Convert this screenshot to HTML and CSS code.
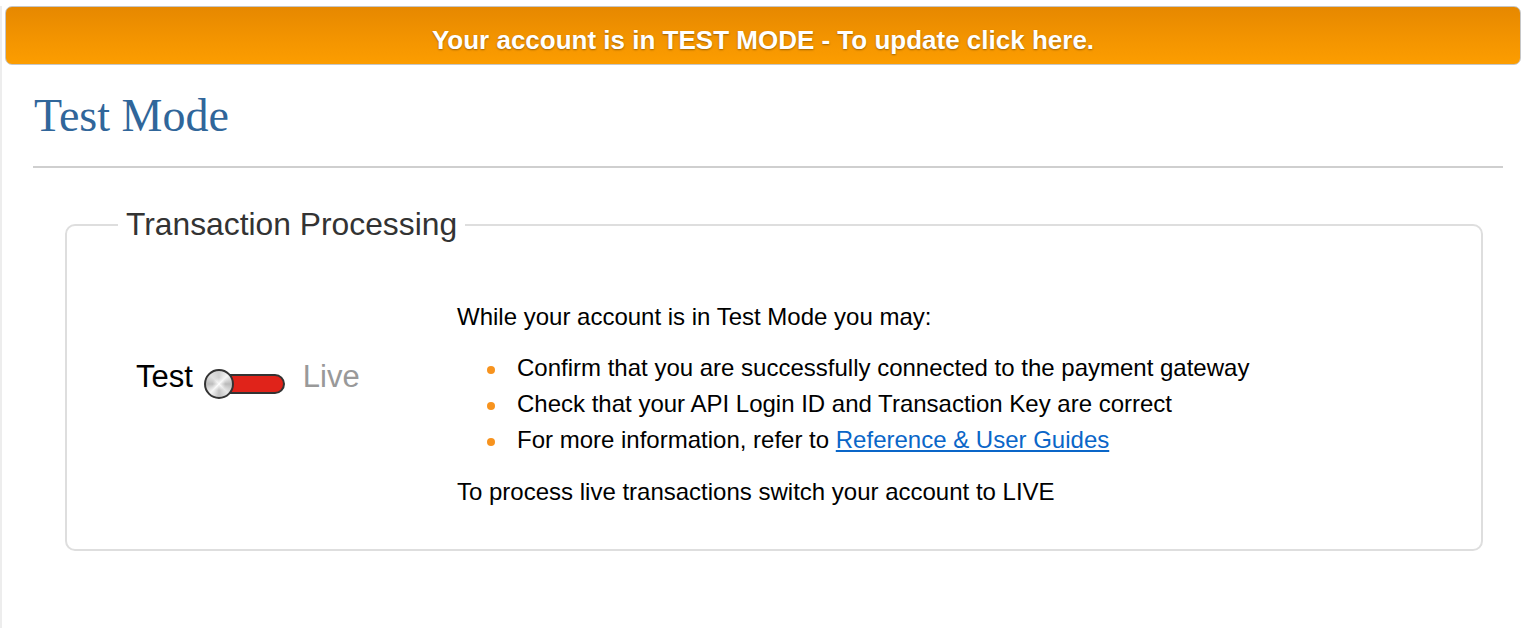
FILE: index.html
```html
<!DOCTYPE html>
<html lang="en">
<head>
<meta charset="utf-8">
<title>Test Mode</title>
<link rel="stylesheet" href="styles.css">
</head>
<body>
<div class="page">
  <div class="banner">Your account is in TEST MODE - To update click here.</div>
  <div class="main">
    <h1 class="title">Test Mode</h1>
    <div class="rule"></div>
    <fieldset class="panel">
      <legend class="panel-legend">Transaction Processing</legend>
      <div class="panel-body">
        <div class="mode-col">
          <div class="mode-switch">
            <span class="mode-label mode-on">Test</span>
            <span class="toggle">
              <span class="toggle-knob"></span>
              <span class="toggle-track"></span>
            </span>
            <span class="mode-label mode-off">Live</span>
          </div>
        </div>
        <div class="info-col">
          <p class="info-text">While your account is in Test Mode you may:</p>
          <ul class="info-list">
            <li>Confirm that you are successfully connected to the payment gateway</li>
            <li>Check that your API Login ID and Transaction Key are correct</li>
            <li>For more information, refer to <a class="info-link" href="#">Reference &amp; User Guides</a></li>
          </ul>
          <p class="info-text">To process live transactions switch your account to LIVE</p>
        </div>
      </div>
    </fieldset>
  </div>
</div>
</body>
</html>
```
FILE: styles.css
```css
html, body {
  margin: 0;
  padding: 0;
  background: #ffffff;
}

body {
  font-family: "Liberation Sans", Arial, sans-serif;
  color: #000;
}

.page {
  margin-top: 6px;
  min-height: 622px;
  border-left: 2px solid #ededed;
  box-sizing: border-box;
}

.banner {
  margin: 0 1px 0 3px;
  padding: 18px 0 9px;
  border: 1px solid #c6c6c6;
  border-radius: 7px;
  background: linear-gradient(to bottom, #e68800 0%, #f29300 50%, #fc9d00 100%);
  color: #fff;
  font-weight: bold;
  font-size: 26px;
  line-height: 30px;
  text-align: center;
  text-shadow: 0 1px 2px rgba(0, 0, 0, 0.35);
}

.main {
  padding: 0 19px 0 31px;
}

.title {
  margin: 25px 0 0;
  padding-left: 1px;
  font-family: "Liberation Serif", "Times New Roman", serif;
  font-weight: normal;
  font-size: 46px;
  line-height: 52px;
  color: #30669a;
}

.rule {
  margin-top: 24px;
  height: 2px;
  background: #cfcfcf;
}

.panel {
  margin: 38px 20px 0 32px;
  padding: 0;
  border: 2px solid #dedede;
  border-radius: 10px;
  min-width: 0;
}

.panel-legend {
  margin-left: 51px;
  padding: 0 8px;
  font-size: 31.8px;
  line-height: 37px;
  color: #333;
}

.panel-body {
  display: flex;
  align-items: flex-start;
  padding: 56px 0 39px;
}

.mode-col {
  width: 390px;
  flex: none;
  padding: 57px 0 0 69px;
  box-sizing: border-box;
}

.mode-switch {
  display: flex;
  align-items: center;
  height: 42px;
}

.mode-label {
  font-size: 31px;
  line-height: 36px;
}

.mode-on {
  color: #000;
  margin-right: 11px;
}

.mode-off {
  color: #999;
  margin-left: 18px;
}

.toggle {
  display: flex;
  align-items: center;
  width: 81px;
  height: 30px;
  flex: none;
  margin-top: 14px;
}

.toggle-knob {
  position: relative;
  z-index: 1;
  width: 30px;
  height: 30px;
  flex: none;
  box-sizing: border-box;
  border: 2px solid #333;
  border-radius: 50%;
  background:
    radial-gradient(circle at 50% 50%, rgba(255,255,255,0.9) 0%, rgba(255,255,255,0) 35%),
    conic-gradient(#d0d0d0, #f4f4f4, #b9b9b9, #e6e6e6, #c2c2c2, #f6f6f6, #bcbcbc, #e0e0e0, #d0d0d0);
}

.toggle-track {
  flex: 1;
  height: 20px;
  margin-left: -15px;
  box-sizing: border-box;
  border: 2px solid #333;
  border-radius: 0 10px 10px 0;
  background: #e0231a;
}

.info-col {
  flex: 1;
  font-size: 24px;
  line-height: 36px;
}

.info-text {
  margin: 0;
}

.info-list {
  margin: 15px 0 16px;
  padding: 0 0 0 60px;
  list-style: none;
}

.info-list li::before {
  content: "";
  display: inline-block;
  width: 8px;
  height: 8px;
  border-radius: 50%;
  background: #f7931e;
  margin-left: -30px;
  margin-right: 22px;
  vertical-align: middle;
}

.info-link {
  color: #0a66c8;
  text-decoration: underline;
}
```
